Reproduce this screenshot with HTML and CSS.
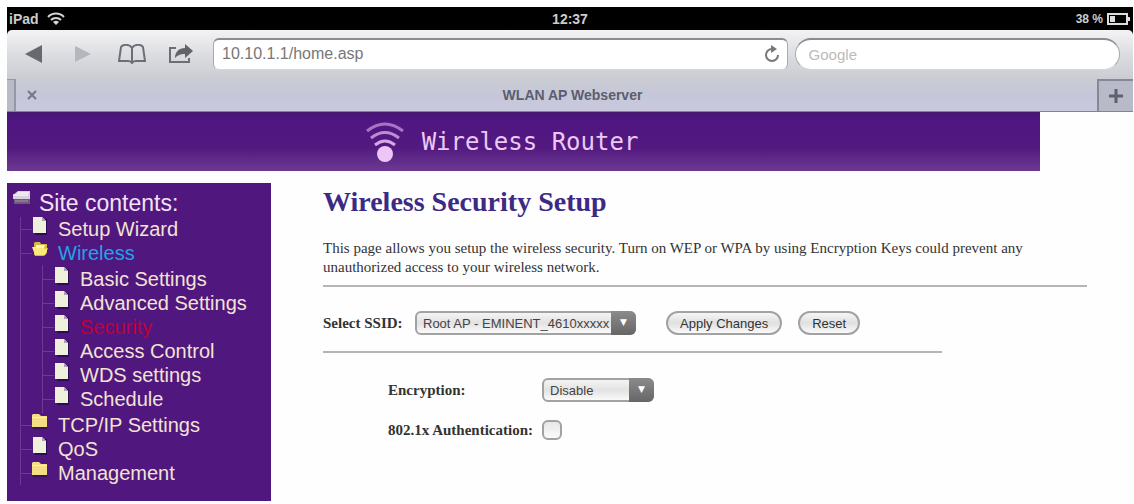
FILE: index.html
```html
<!DOCTYPE html>
<html lang="en">
<head>
    <meta charset="UTF-8">
    <meta name="viewport" content="width=device-width, initial-scale=1.0">
    <title>WLAN AP Webserver</title>
    <link rel="stylesheet" href="styles.css">
</head>
<body>
    <svg class="sprite" aria-hidden="true">
        <symbol id="page" viewBox="0 0 16 18">
            <path d="M3 2h12v16H3z" fill="#2b0a57"/>
            <path d="M1 0h9l4 4v12H1z" fill="#eef0dc"/>
            <path d="M10 0v4h4z" fill="#a9a3b4"/>
        </symbol>
        <symbol id="folder" viewBox="0 0 16 18">
            <path d="M1 4h14v12H1z" fill="#3b1258"/>
            <path d="M0 2l1-1h6l2 2h6v11H0z" fill="#f6dd83"/>
            <path d="M0 4h15v1H0z" fill="#fff3bd"/>
        </symbol>
        <symbol id="folder-open" viewBox="0 0 16 18">
            <path d="M2 2l1-1h5l1 2h6v9l-3 3H3l-1-2z" fill="#d9b83c"/>
            <path d="M0 6h11l2 2 3-1-3 7H3z" fill="#fbe978"/>
            <path d="M4 4h9l-1 3H4z" fill="#fff6b8"/>
        </symbol>
    </svg>

    <header class="browser">
        <div class="status-bar">
            <div class="status-left">
                <span>iPad</span>
                <svg width="18" height="14" viewBox="0 0 18 14" fill="none" stroke="#d5d5d5" stroke-width="2">
                    <path d="M1 5a11 11 0 0 1 16 0M4 8a7 7 0 0 1 10 0"/>
                    <path d="M6 10a4 4 0 0 1 6 0l-3 3z" fill="#d5d5d5" stroke="none"/>
                </svg>
            </div>
            <span class="clock">12:37</span>
            <div class="status-right">
                <span>38 %</span>
                <svg width="24" height="12" viewBox="0 0 24 12" fill="none" stroke="#ddd">
                    <path d="M1 1h19v10H1z" stroke-width="2"/>
                    <path d="M3 3h5v6H3z" fill="#ddd" stroke="none"/>
                    <path d="M22 4v4" stroke-width="2"/>
                </svg>
            </div>
        </div>

        <div class="toolbar">
            <button class="tool" aria-label="Back">
                <svg width="18" height="18" viewBox="0 0 18 18"><path d="M17 0v18L0 9z" fill="#666a70"/></svg>
            </button>
            <button class="tool" aria-label="Forward">
                <svg width="18" height="18" viewBox="0 0 18 18"><path d="M1 1v16l16-8z" fill="#b4b7bd"/></svg>
            </button>
            <button class="tool" aria-label="Bookmarks">
                <svg width="28" height="20" viewBox="0 0 28 20" fill="none" stroke="#6b6e76" stroke-width="2">
                    <path d="M14 4v14M14 4C12 0 5 0 3 3L1 17h9c2 0 3 0 4 2 1-2 2-2 4-2h9L25 3c-2-3-9-3-11 1"/>
                </svg>
            </button>
            <button class="tool" aria-label="Share">
                <svg width="26" height="20" viewBox="0 0 26 20">
                    <path d="M8 4H2v14h19v-4" fill="none" stroke="#6b6e76" stroke-width="2"/>
                    <path d="M17 0l8 7-8 7v-4c-5 0-7 1-10 4 0-6 4-10 10-10z" fill="#60636a"/>
                </svg>
            </button>
            <div class="address">
                <input type="text" aria-label="Address" value="10.10.1.1/home.asp">
                <button class="reload" aria-label="Reload">
                    <svg width="16" height="18" viewBox="0 0 16 18">
                        <path d="M8 4a6 6 0 1 0 6 6" fill="none" stroke="#777" stroke-width="2"/>
                        <path d="M7 0l6 4-6 4z" fill="#777"/>
                    </svg>
                </button>
            </div>
            <input class="search" type="search" aria-label="Search" placeholder="Google">
        </div>

        <div class="tabs">
            <span class="tab-edge"></span>
            <button class="tab-close" aria-label="Close tab">
                <svg width="10" height="10" viewBox="0 0 10 10"><path d="M1 1l8 8M9 1L1 9" stroke="#74768a" stroke-width="2"/></svg>
            </button>
            <span class="tab-title">WLAN AP Webserver</span>
            <button class="tab-new" aria-label="New tab">
                <svg width="16" height="16" viewBox="0 0 16 16"><path d="M8 1v14M1 8h14" stroke="#5d5f72" stroke-width="3"/></svg>
            </button>
        </div>
    </header>

    <div class="banner">
        <svg width="40" height="42" viewBox="0 0 40 42" fill="none" stroke-width="3">
            <path d="M2 10q18-14 36 0" stroke="#a873c4"/>
            <path d="M6 17q14-11 28 0" stroke="#bd8bd4"/>
            <path d="M10 24q10-8 20 0" stroke="#d3a8e4"/>
            <circle cx="20" cy="33" r="8" fill="#ecc6f7"/>
        </svg>
        <span>Wireless Router</span>
    </div>

    <div class="layout">
        <nav class="sidebar">
            <div class="tree-title">
                <svg width="20" height="16" viewBox="0 0 20 16">
                    <path d="M6 1h12v8H1V5z" fill="#d9cfe0"/>
                    <path d="M1 5h15M5 3h12" stroke="#fff"/>
                    <path d="M2 9h16v5H2z" fill="#6f5a78"/>
                    <path d="M3 11h13" stroke="#a796a0"/>
                </svg>
                <span>Site contents:</span>
            </div>
            <ul class="tree">
                <li><a href="#"><svg class="icon"><use href="#page"/></svg>Setup Wizard</a></li>
                <li>
                    <a href="#" class="open"><svg class="icon"><use href="#folder-open"/></svg>Wireless</a>
                    <ul class="subtree">
                        <li><a href="#"><svg class="icon"><use href="#page"/></svg>Basic Settings</a></li>
                        <li><a href="#"><svg class="icon"><use href="#page"/></svg>Advanced Settings</a></li>
                        <li><a href="#" class="active"><svg class="icon"><use href="#page"/></svg>Security</a></li>
                        <li><a href="#"><svg class="icon"><use href="#page"/></svg>Access Control</a></li>
                        <li><a href="#"><svg class="icon"><use href="#page"/></svg>WDS settings</a></li>
                        <li><a href="#"><svg class="icon"><use href="#page"/></svg>Schedule</a></li>
                    </ul>
                </li>
                <li><a href="#"><svg class="icon"><use href="#folder"/></svg>TCP/IP Settings</a></li>
                <li><a href="#"><svg class="icon"><use href="#page"/></svg>QoS</a></li>
                <li><a href="#"><svg class="icon"><use href="#folder"/></svg>Management</a></li>
            </ul>
        </nav>

        <main class="content">
            <h1>Wireless Security Setup</h1>
            <p>This page allows you setup the wireless security. Turn on WEP or WPA by using Encryption Keys could prevent any unauthorized access to your wireless network.</p>
            <hr>
            <form>
                <div class="ssid-row">
                    <label for="ssid">Select SSID:</label>
                    <span class="select ssid">
                        <select id="ssid">
                            <option>Root AP - EMINENT_4610xxxxx</option>
                        </select>
                    </span>
                    <button type="submit" class="btn">Apply Changes</button>
                    <button type="reset" class="btn">Reset</button>
                </div>
                <hr class="short">
                <div class="settings">
                    <label for="encryption">Encryption:</label>
                    <span class="select">
                        <select id="encryption">
                            <option>Disable</option>
                        </select>
                    </span>
                    <label for="auth">802.1x Authentication:</label>
                    <input type="checkbox" id="auth">
                </div>
            </form>
        </main>
    </div>
</body>
</html>
```

FILE: styles.css
```css
:root {
    --purple: #50177f;
    --line: #6c3b94;
    --sans: "Liberation Sans", Arial, sans-serif;
    --serif: "Liberation Serif", "Times New Roman", serif;
    --mono: "DejaVu Sans Mono", Consolas, monospace;
}

* {
    box-sizing: border-box;
    margin: 0;
    padding: 0;
}

body {
    background: #fefefe;
    padding: 7px 1px 0 7px;
    font-family: var(--serif);
    color: #333;
}

button, input, select {
    font-family: var(--sans);
}

svg {
    display: block;
    flex-shrink: 0;
}

.sprite {
    display: none;
}

/* browser chrome */
.browser {
    font-family: var(--sans);
    background: #000;
}

.status-bar {
    display: grid;
    grid-template-columns: 1fr auto 1fr;
    align-items: center;
    height: 23px;
    padding: 0 2px;
    color: #ccc;
    font-size: 14px;
    font-weight: bold;
}

.status-left, .status-right {
    display: flex;
    align-items: center;
    gap: 8px;
}

.status-right {
    justify-content: flex-end;
    gap: 4px;
    font-size: 12px;
}

.toolbar {
    display: flex;
    align-items: center;
    height: 49px;
    padding: 0 13px 2px 2px;
    background: linear-gradient(#f3f3f4, #dcdde1 50%, #cbccd3);
    border-radius: 5px 5px 0 0;
}

.tool {
    display: flex;
    align-items: center;
    justify-content: center;
    width: 49px;
    height: 31px;
    background: none;
    border: none;
}

.address, .search {
    height: 32px;
    background: #fff;
    border: 1px solid #a9a9b0;
    border-top: 2px solid #8b8b90;
    border-bottom-color: #d5d5da;
}

.address {
    display: flex;
    flex: 15;
    align-items: center;
    margin: 0 7px 0 8px;
    padding: 0 7px 0 8px;
    border-radius: 6px;
}

.address input {
    flex: 1;
    min-width: 0;
    border: none;
    background: none;
    color: #777;
    font-size: 16px;
}

.reload {
    border: none;
    background: none;
}

.search {
    flex: 8;
    min-width: 0;
    padding: 0 13px;
    border-radius: 16px;
    font-size: 15px;
    appearance: none;
}

.search::placeholder {
    color: #bbb;
}

.tabs {
    display: flex;
    align-items: stretch;
    height: 33px;
    background: linear-gradient(#cbccd4, #c5c7d8 50%, #cac9df);
    border-bottom: 1px solid #8d7aa8;
}

.tab-edge {
    width: 9px;
    background: #b9bbc6;
    border-top: 1px solid #9698a5;
    border-right: 2px solid #9698a5;
}

.tab-close {
    display: flex;
    align-items: center;
    justify-content: center;
    width: 32px;
    background: none;
    border: none;
}

.tab-title {
    flex: 1;
    align-self: center;
    text-align: center;
    color: #5c5d6e;
    font-size: 14px;
    font-weight: bold;
}

.tab-new {
    display: flex;
    align-items: center;
    justify-content: center;
    width: 36px;
    background: #b9bac8;
    border: none;
    border-top: 2px solid #85879a;
    border-left: 2px solid #85879a;
}

/* router page */
.banner {
    display: flex;
    align-items: center;
    justify-content: center;
    gap: 17px;
    height: 59px;
    margin-right: 93px;
    padding-right: 44px;
    background: linear-gradient(#451870, #501682 15%, #52197f 60%, #6c3a92);
    color: #ecc9f5;
    font-family: var(--mono);
    font-size: 24px;
}

.layout {
    display: grid;
    grid-template-columns: 264px 1fr;
    gap: 52px;
    align-items: start;
    margin-top: 12px;
}

.sidebar {
    padding: 7px 0 16px;
    background: var(--purple);
    font-family: var(--sans);
}

.tree-title {
    display: flex;
    align-items: flex-start;
    gap: 7px;
    padding-left: 5px;
    color: #f3e2f5;
    font-size: 23px;
    line-height: 27px;
}

.tree {
    margin-left: 13px;
    border-left: 1px solid var(--line);
    list-style: none;
}

.tree a {
    display: flex;
    align-items: center;
    gap: 10px;
    color: #f2e3d3;
    font-size: 20px;
    line-height: 24px;
    text-decoration: none;
}

.tree a::before {
    content: "";
    width: 11px;
    height: 1px;
    margin-right: -10px;
    background: var(--line);
}

.tree .open {
    color: #20a3e8;
}

.tree .active {
    color: #c00038;
}

.icon {
    width: 16px;
    height: 18px;
    margin-bottom: 6px;
}

.subtree {
    margin-left: 21px;
    padding: 2px 0;
    border-left: 1px solid var(--line);
    list-style: none;
}

.content {
    padding: 4px 46px 0 0;
}

h1 {
    color: #3c2a85;
    font-size: 28px;
    line-height: 30px;
}

p {
    margin-top: 22px;
    font-size: 15px;
    line-height: 19px;
}

hr {
    margin-top: 8px;
    border: none;
    border-top: 2px solid #b5b5b5;
}

label {
    font-size: 15px;
    font-weight: bold;
}

.ssid-row {
    display: flex;
    align-items: center;
    margin-top: 24px;
}

.ssid-row label {
    width: 92px;
}

.select {
    display: inline-block;
    position: relative;
    width: 112px;
}

.select select {
    width: 100%;
    height: 24px;
    padding: 0 22px 0 6px;
    background: linear-gradient(#f4f4f4, #e2e2e2 50%, #fafafa);
    border: 2px solid #a2a2a2;
    border-radius: 6px;
    color: #444;
    font-size: 13px;
    appearance: none;
}

.select::after {
    content: "▼";
    position: absolute;
    top: 0;
    right: 0;
    width: 25px;
    height: 24px;
    background: linear-gradient(#8b8b8b, #666);
    border-radius: 0 6px 6px 0;
    color: #fff;
    font: 9px/22px "DejaVu Sans", sans-serif;
    text-align: center;
    pointer-events: none;
}

.ssid {
    width: 221px;
    margin-right: 14px;
}

.btn {
    height: 24px;
    margin-left: 16px;
    padding: 0 12px;
    background: linear-gradient(#f6f6f6, #e0e0e0 50%, #fafafa);
    border: 2px solid #a2a2a2;
    border-radius: 12px;
    color: #333;
    font-size: 13px;
}

.short {
    width: 81%;
    margin-top: 16px;
}

.settings {
    display: grid;
    grid-template-columns: auto 1fr;
    gap: 18px 9px;
    align-items: center;
    padding: 25px 0 0 65px;
}

.settings input {
    width: 20px;
    height: 20px;
    background: linear-gradient(#e8e8e8, #fafafa);
    border: 2px solid #a2a2a2;
    border-radius: 6px;
    appearance: none;
}
```
